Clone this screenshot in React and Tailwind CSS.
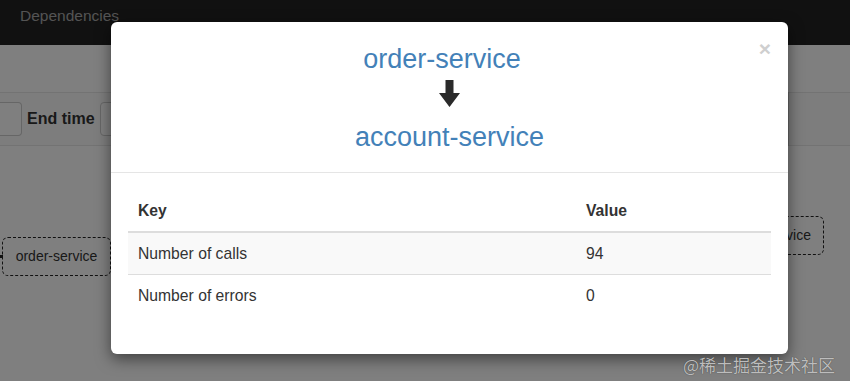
export default function App() {
  return (
    <div className="relative w-[850px] h-[381px] overflow-hidden bg-white font-['Liberation_Sans',Arial,sans-serif]">
      {/* Background page */}
      <nav className="h-[45px] bg-[#222] pl-[20px] pt-[6px] text-[15.5px] leading-[20px] text-[#a8a8a8]">
        Dependencies
      </nav>
      <div className="mt-[47px] h-[54px] border-y border-[#e6e6e6] bg-[#fbfbfb] flex items-center">
        <div className="w-[22px] h-[34px] border-y border-r border-[#ccc] rounded-r-[4px] bg-white" />
        <span className="ml-[5px] font-bold text-[16px] text-[#333]">End time</span>
        <div className="ml-[5px] w-[300px] h-[34px] border border-[#ccc] rounded-[4px] bg-white" />
        <div className="ml-auto w-[62px] h-[54px] border-l border-[#ccc]" />
      </div>
      <div className="relative h-[233px]">
        <div className="absolute left-[2px] top-[91px] w-[109px] h-[39px] border border-dashed border-[#222] rounded-[6px] flex items-center justify-center text-[14px] text-[#333]">
          order-service
        </div>
        <div className="absolute left-0 top-[109px] w-[3px] h-[3px] bg-[#222]" />
        <div className="absolute left-[700px] top-[70px] w-[124px] h-[39px] border border-dashed border-[#222] rounded-[6px] flex items-center justify-center text-[14px] text-[#333]">
          account-service
        </div>
      </div>

      {/* Overlay */}
      <div className="absolute inset-0 bg-black/50" />

      {/* Modal */}
      <div className="absolute left-[111px] top-[22px] w-[677px] h-[332px] bg-white rounded-[6px] shadow-[0_5px_15px_rgba(0,0,0,0.5)]">
        <button className="absolute right-[17px] top-[16px] text-[21px] font-bold leading-none text-[#cfcfcf]">
          ×
        </button>
        <div className="flex flex-col items-center pt-[22px] pb-[20px] border-b border-[#e5e5e5] text-[27px] leading-[30px] text-[#4381b8]">
          <div className="pr-[15px]">order-service</div>
          <svg className="mt-[6px]" width="21" height="27" viewBox="0 0 21 27">
            <path d="M6.5 0 H14.5 V13 H21 L10.5 27 L0 13 H6.5 Z" fill="#2a2a2a" />
          </svg>
          <div className="mt-[15px]">account-service</div>
        </div>
        <div className="px-[17px] pt-[18px] text-[15.7px] text-[#333]">
          <div className="h-[42px] flex items-center border-b-2 border-[#ddd] font-bold">
            <div className="w-[450px] pl-[10px]">Key</div>
            <div className="pl-[8px]">Value</div>
          </div>
          <div className="h-[42px] flex items-center border-b border-[#ddd] bg-[#f9f9f9]">
            <div className="w-[450px] pl-[10px]">Number of calls</div>
            <div className="pl-[8px]">94</div>
          </div>
          <div className="h-[41px] flex items-center">
            <div className="w-[450px] pl-[10px]">Number of errors</div>
            <div className="pl-[8px]">0</div>
          </div>
        </div>
      </div>

      {/* Watermark */}
      <div className="absolute left-[683px] top-[354px] text-[17px] leading-[22px] text-[#bdbdbd] font-['Noto_Sans_CJK_SC',sans-serif] [text-shadow:0_0_1px_rgba(0,0,0,0.6)]">
        @稀土掘金技术社区
      </div>
    </div>
  );
}
